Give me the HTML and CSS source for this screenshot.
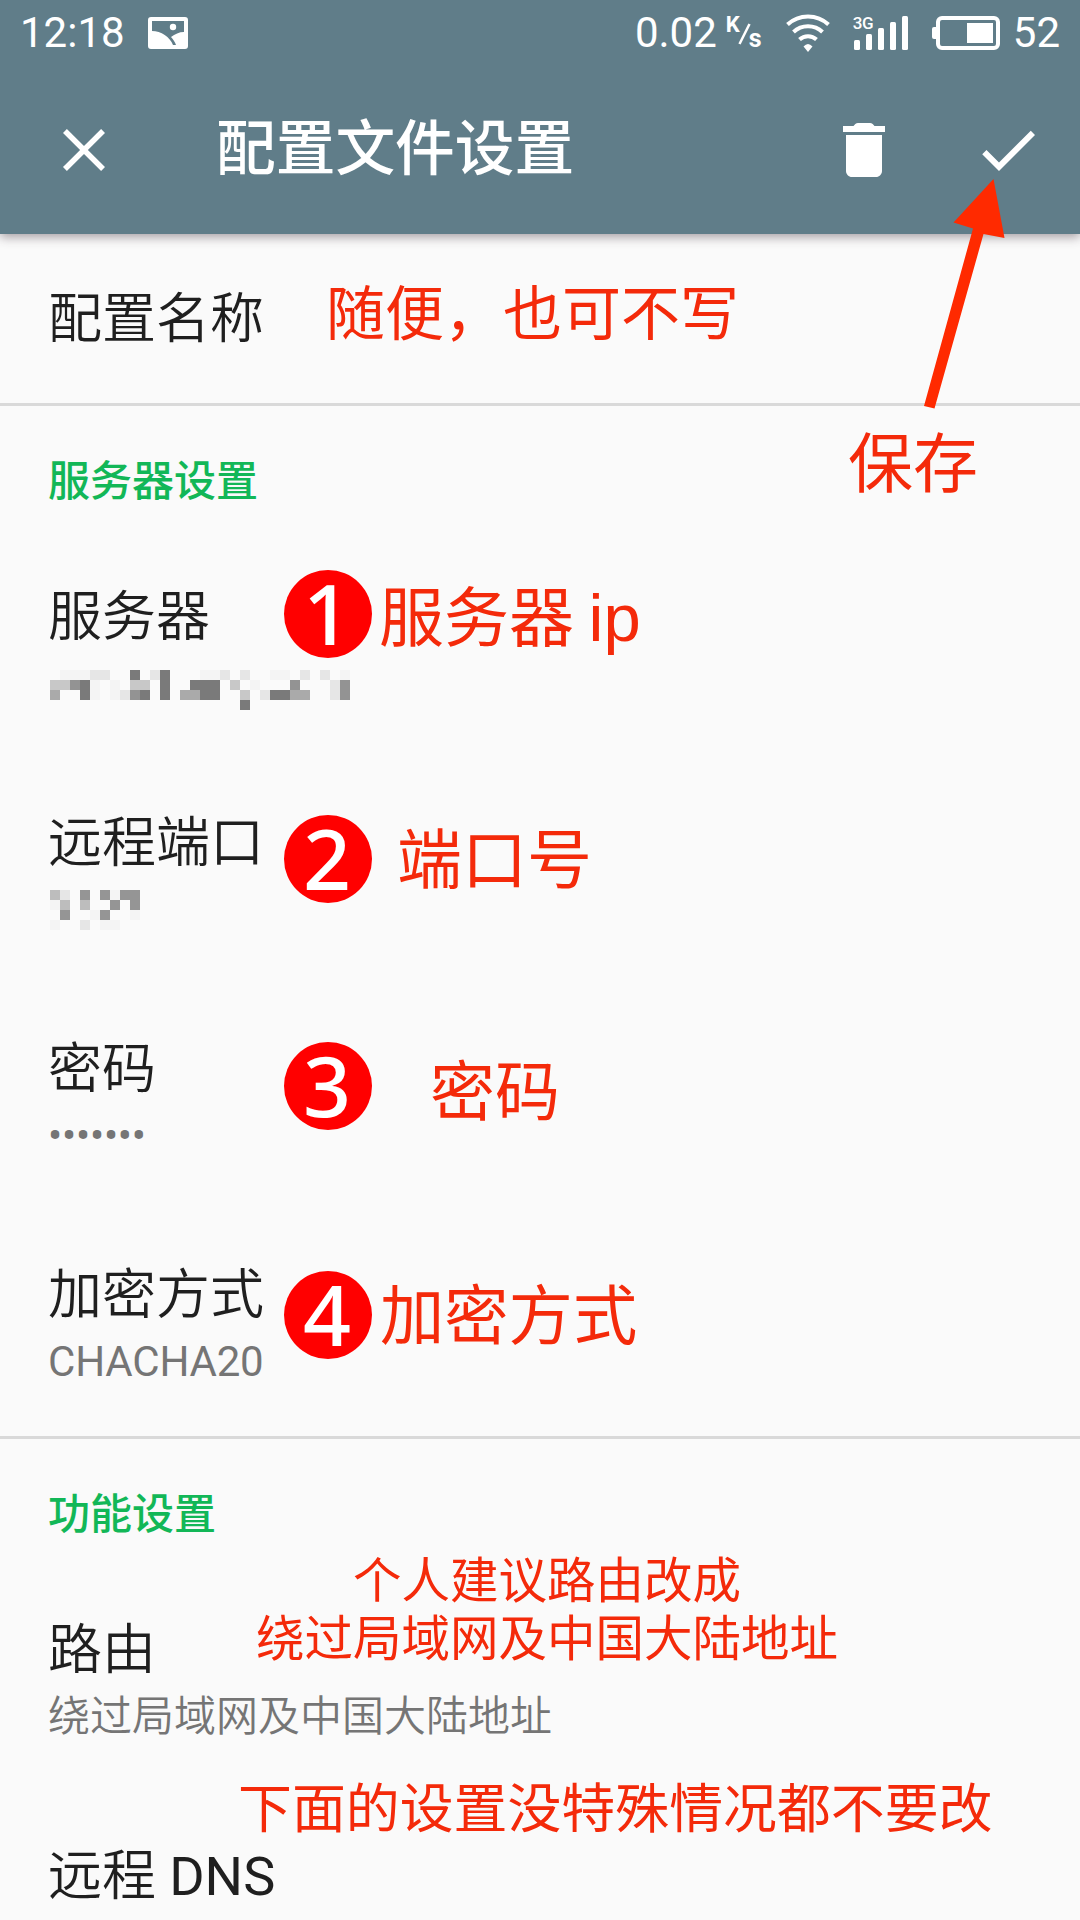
FILE: index.html
```html
<!DOCTYPE html>
<html lang="zh-CN">
<head>
    <meta charset="UTF-8">
    <meta name="viewport" content="width=device-width, initial-scale=1.0">
    <title>配置文件设置</title>
    <link rel="stylesheet" href="styles.css">
</head>
<body>
    <div class="screen">
        <header class="header">
            <div class="status-bar">
                <div class="status-left">
                    <span>12:18</span>
                    <svg class="picture-icon" width="40" height="32" viewBox="0 0 40 32">
                        <path fill="#fff" fill-rule="evenodd" d="M3 0h34a3 3 0 0 1 3 3v26a3 3 0 0 1-3 3H3a3 3 0 0 1-3-3V3a3 3 0 0 1 3-3zM4 4v10c9 0 18 6 21 14h3c-1-3-3-6-5-8 4-3 8-5 13-5V4z"/>
                        <circle cx="25" cy="10" r="3.2" fill="#fff"/>
                    </svg>
                </div>
                <div class="status-right">
                    <span>0.02</span>
                    <span class="speed-unit"><span class="unit-k">K</span><svg width="13" height="22" viewBox="0 0 13 22"><path d="M1.5 21L11.5 1" stroke="#fff" stroke-width="2.5"/></svg><span class="unit-s">s</span></span>
                    <svg class="wifi-icon" width="44" height="38" viewBox="0 0 44 38">
                        <g fill="none" stroke="#fff" stroke-width="4">
                            <path d="M1.5 10.5a30 30 0 0 1 41 0"/>
                            <path d="M7.5 18a21 21 0 0 1 29 0"/>
                            <path d="M13.5 25.5a12.5 12.5 0 0 1 17 0"/>
                        </g>
                        <path fill="#fff" d="M17.5 32.5q4.500-5 9 0L22 38z"/>
                    </svg>
                    <div class="signal">
                        <span class="signal-type">3G</span>
                        <svg width="54" height="34" viewBox="0 0 54 34">
                            <g fill="#fff">
                                <rect x="0" y="24" width="6" height="10" rx="1.500"/>
                                <rect x="12" y="18" width="6" height="16" rx="1.500"/>
                                <rect x="24" y="12" width="6" height="22" rx="1.500"/>
                                <rect x="36" y="6" width="6" height="28" rx="1.500"/>
                                <rect x="48" y="0" width="6" height="34" rx="1.500"/>
                            </g>
                        </svg>
                    </div>
                    <svg class="battery-icon" width="68" height="34" viewBox="0 0 68 34">
                        <rect x="6" y="2" width="60" height="30" rx="4" fill="none" stroke="#fff" stroke-width="4"/>
                        <path fill="#fff" d="M5 11v12H2q-2 0-2-2v-8q0-2 2-2z"/>
                        <rect x="35" y="7" width="26" height="20" fill="#fff"/>
                    </svg>
                    <span>52</span>
                </div>
            </div>
            <div class="toolbar">
                <svg width="72" height="72" viewBox="0 0 24 24"><path fill="#fff" d="M19 6.300L17.700 5 12 10.700 6.300 5 5 6.300 10.700 12 5 17.700 6.300 19 12 13.300 17.700 19 19 17.700 13.300 12z"/></svg>
                <h1>配置文件设置</h1>
                <div class="actions">
                    <svg width="72" height="72" viewBox="0 0 24 24"><path fill="#fff" d="M6 19c0 1.100.9 2 2 2h8c1.100 0 2-.9 2-2V7H6v12zM19 4h-3.500l-.6-.7q-.4-.3-.9-.3h-4q-.5 0-.9.3L8.500 4H5v2h14V4z"/></svg>
                    <svg width="72" height="72" viewBox="0 0 24 24"><path fill="#fff" d="M9 16.170L4.830 12l-1.420 1.410L9 19 21 7l-1.410-1.410z"/></svg>
                </div>
            </div>
        </header>

        <section class="group name-group">
            <div class="title">配置名称</div>
            <div class="note note-name">随便，也可不写</div>
        </section>

        <section class="group">
            <h2>服务器设置</h2>
            <div class="row">
                <div class="title">服务器</div>
                <svg class="mosaic mosaic-server" width="300" height="40" viewBox="0 0 30 4" shape-rendering="crispEdges">
                    <g fill="#f4f4f4">
                        <rect x="1" y="0" width="3" height="1"/>
                        <rect x="15" y="0" width="2" height="1"/>
                        <rect x="22" y="0" width="2" height="1"/>
                        <rect x="29" y="0" width="1" height="1"/>
                        <rect x="6" y="1" width="1" height="2"/>
                        <rect x="4" y="1" width="1" height="2"/>
                        <rect x="20" y="1" width="1" height="1"/>
                    </g>
                    <g fill="#e6e6e6">
                        <rect x="4" y="0" width="2" height="1"/>
                        <rect x="10" y="0" width="1" height="1"/>
                        <rect x="17" y="0" width="1" height="1"/>
                        <rect x="19" y="0" width="1" height="1"/>
                        <rect x="25" y="0" width="1" height="1"/>
                        <rect x="27" y="0" width="1" height="1"/>
                        <rect x="7" y="2" width="1" height="1"/>
                        <rect x="21" y="2" width="1" height="1"/>
                        <rect x="28" y="1" width="1" height="2"/>
                    </g>
                    <g fill="#c8c8c8">
                        <rect x="0" y="1" width="2" height="1"/>
                        <rect x="8" y="1" width="2" height="1"/>
                        <rect x="18" y="1" width="1" height="1"/>
                        <rect x="19" y="2" width="1" height="1"/>
                    </g>
                    <g fill="#aaa">
                        <rect x="0" y="2" width="1" height="1"/>
                        <rect x="13" y="2" width="2" height="1"/>
                        <rect x="24" y="2" width="2" height="1"/>
                    </g>
                    <g fill="#939393">
                        <rect x="2" y="1" width="1" height="1"/>
                        <rect x="29" y="1" width="1" height="2"/>
                        <rect x="8" y="2" width="1" height="1"/>
                        <rect x="24" y="1" width="1" height="1"/>
                    </g>
                    <g fill="#7a7a7a">
                        <rect x="8" y="0" width="1" height="1"/>
                        <rect x="11" y="0" width="1" height="3"/>
                        <rect x="3" y="1" width="1" height="2"/>
                        <rect x="9" y="2" width="1" height="1"/>
                        <rect x="14" y="1" width="3" height="1"/>
                        <rect x="15" y="2" width="2" height="1"/>
                        <rect x="22" y="2" width="2" height="1"/>
                        <rect x="19" y="3" width="1" height="1"/>
                    </g>
                </svg>
                <div class="badge badge-1">1</div>
                <div class="note note-server">服务器 <span class="note-latin">ip</span></div>
            </div>
            <div class="row">
                <div class="title">远程端口</div>
                <svg class="mosaic mosaic-port" width="90" height="40" viewBox="0 0 9 4" shape-rendering="crispEdges">
                    <g fill="#f4f4f4">
                        <rect x="6" y="0" width="1" height="1"/>
                        <rect x="0" y="1" width="1" height="1"/>
                        <rect x="4" y="2" width="1" height="1"/>
                        <rect x="8" y="2" width="1" height="1"/>
                        <rect x="0" y="3" width="1" height="1"/>
                        <rect x="5" y="3" width="2" height="1"/>
                    </g>
                    <g fill="#e6e6e6">
                        <rect x="1" y="0" width="1" height="1"/>
                        <rect x="3" y="3" width="1" height="1"/>
                    </g>
                    <g fill="#bdbdbd">
                        <rect x="0" y="0" width="1" height="1"/>
                        <rect x="1" y="1" width="1" height="1"/>
                        <rect x="3" y="1" width="1" height="1"/>
                    </g>
                    <g fill="#959595">
                        <rect x="3" y="0" width="1" height="1"/>
                        <rect x="5" y="0" width="1" height="1"/>
                        <rect x="7" y="0" width="2" height="1"/>
                        <rect x="6" y="1" width="1" height="1"/>
                        <rect x="8" y="1" width="1" height="1"/>
                        <rect x="1" y="2" width="1" height="1"/>
                        <rect x="5" y="2" width="1" height="1"/>
                    </g>
                </svg>
                <div class="badge badge-2">2</div>
                <div class="note note-port">端口号</div>
            </div>
            <div class="row">
                <div class="title">密码</div>
                <div class="summary latin">•••••••</div>
                <div class="badge badge-3">3</div>
                <div class="note note-password">密码</div>
            </div>
            <div class="row row-last">
                <div class="title">加密方式</div>
                <div class="summary latin">CHACHA20</div>
                <div class="badge badge-4">4</div>
                <div class="note note-method">加密方式</div>
            </div>
        </section>

        <section class="group">
            <h2>功能设置</h2>
            <div class="row">
                <div class="title">路由</div>
                <div class="summary">绕过局域网及中国大陆地址</div>
                <div class="note note-route">个人建议路由改成<br>绕过局域网及中国大陆地址</div>
            </div>
            <div class="row">
                <div class="title">远程 <span class="latin">DNS</span></div>
                <div class="note note-below">下面的设置没特殊情况都不要改</div>
            </div>
        </section>

        <!-- arrow to the save button -->
        <svg class="arrow" width="82" height="232" viewBox="0 0 82 232">
            <path fill="#ff2a00" d="M70.500 2L30.500 45.500l19.500 6L1 229l10.500 2.500L60.500 57l21 4z"/>
        </svg>
        <div class="note note-save">保存</div>
    </div>
</body>
</html>
```
FILE: styles.css
```css
* {
    box-sizing: border-box;
}

body {
    margin: 0;
    background: #fafafa;
    font-family: Roboto, 'Noto Sans CJK SC', sans-serif;
    color: #1f1f1f;
}

svg {
    display: block;
    flex-shrink: 0;
}

h1, h2 {
    margin: 0;
    font-weight: 500;
}

.screen {
    position: relative;
    width: 1080px;
    height: 1920px;
    overflow: hidden;
}

/* Header */
.header {
    position: relative;
    height: 234px;
    background: #607d89;
    color: #fff;
    box-shadow: 0 3px 10px rgba(60, 45, 55, 0.45);
}

.status-bar {
    display: flex;
    justify-content: space-between;
    height: 66px;
    padding: 0 20px;
    font-size: 42px;
    line-height: 68px;
}

.status-left, .status-right {
    display: flex;
    align-items: center;
}

.picture-icon {
    margin-left: 23px;
}

.speed-unit {
    display: flex;
    width: 37px;
    height: 34px;
    margin-left: 9px;
    font-size: 22px;
    font-weight: 700;
    line-height: 22px;
}

.speed-unit svg {
    margin: 7px -2px 0 -2px;
}

.unit-k {
    margin-top: -2px;
}

.unit-s {
    margin-top: 12px;
    font-size: 25px;
}

.wifi-icon {
    margin-left: 23px;
}

.signal {
    position: relative;
    margin-left: 24px;
}

.signal-type {
    position: absolute;
    top: 0;
    left: -1px;
    font-size: 17px;
    font-weight: 500;
    line-height: 14px;
    letter-spacing: -0.5px;
}

.battery-icon {
    margin: 0 13px 0 24px;
}

.toolbar {
    display: flex;
    align-items: center;
    height: 168px;
    padding: 0 36px 0 48px;
}

h1 {
    margin-left: 96px;
    font-size: 59.7px;
    line-height: 82px;
}

.actions {
    display: flex;
    gap: 72px;
    margin-left: auto;
}

/* Settings list */
.group {
    border-bottom: 3px solid #d9d9d9;
}

.name-group {
    position: relative;
    height: 172px;
    padding: 51px 48px 0;
}

h2 {
    height: 150px;
    padding-left: 48px;
    font-size: 42px;
    line-height: 152px;
    color: #12b757;
}

.row {
    position: relative;
    height: 226px;
    padding: 27px 48px 0;
}

.row-last {
    height: 202px;
}

.title {
    font-size: 54px;
    font-weight: 350;
    line-height: 70px;
}

.summary {
    font-size: 42px;
    font-weight: 350;
    line-height: 62px;
    color: #757575;
}

.latin {
    font-weight: 400;
}

.summary.latin {
    letter-spacing: -0.2px;
}

.mosaic {
    margin-left: 2px;
}

.mosaic-server {
    margin-top: 17px;
}

.mosaic-port {
    margin-top: 11px;
}

/* Red notes on top of the list */
.badge {
    position: absolute;
    left: 284px;
    width: 88px;
    height: 88px;
    padding-right: 2px;
    border-radius: 50%;
    background: #f00;
    color: #fff;
    font-family: 'Noto Sans', sans-serif;
    font-size: 84px;
    font-weight: 500;
    line-height: 86px;
    text-align: center;
}

.badge-1 { top: 14px; }
.badge-2 { top: 33px; }
.badge-3 { top: 34px; }
.badge-4 { top: 37px; }

.note {
    position: absolute;
    font-family: 'Noto Sans CJK SC', sans-serif;
    font-size: 65px;
    line-height: 66px;
    color: #f42a0a;
    white-space: nowrap;
}

.note-latin {
    font-family: 'Liberation Sans', sans-serif;
    font-size: 67px;
}

.note-name {
    top: 46px;
    left: 326px;
    font-size: 59px;
    line-height: 60px;
}

.note-server {
    top: 24px;
    left: 379px;
}

.note-port {
    top: 40px;
    left: 397px;
}

.note-password {
    top: 46px;
    left: 430px;
}

.note-method {
    top: 44px;
    left: 380px;
    font-size: 64.3px;
}

.note-route {
    top: -41px;
    left: 256px;
    font-size: 48.5px;
    line-height: 58px;
    text-align: center;
}

.note-below {
    top: -42px;
    left: 238px;
    font-size: 53.9px;
    line-height: 64px;
}

.note-save {
    top: 426px;
    left: 848px;
}

.arrow {
    position: absolute;
    top: 177px;
    left: 923px;
}
```
